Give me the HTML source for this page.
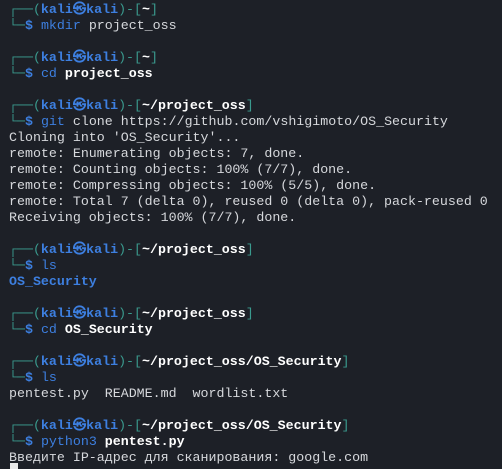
<!DOCTYPE html><html><head><style>
body{margin:0;background:#1d2027;width:502px;height:467px;overflow:hidden}
pre{margin:0;padding:2px 0 0 9px;font-family:"Liberation Mono","DejaVu Sans Mono",monospace;font-size:13.3px;line-height:16px;color:#d6d8dc}
.g{color:#3a9a8e}.b{color:#3d7fe0;font-weight:bold}.d{color:#3d7fe0}.w{color:#fff;font-weight:bold}
.cur{position:absolute;left:10px;top:463px;width:8px;height:6px;background:#e8e8e8}
</style></head><body><pre><span class="g">┌──(</span><span class="b">kali㉿kali</span><span class="g">)-[</span><span class="w">~</span><span class="g">]</span>
<span class="g">└─</span><span class="b">$</span> <span class="d">mkdir</span> project_oss

<span class="g">┌──(</span><span class="b">kali㉿kali</span><span class="g">)-[</span><span class="w">~</span><span class="g">]</span>
<span class="g">└─</span><span class="b">$</span> <span class="d">cd</span> <span class="w">project_oss</span>

<span class="g">┌──(</span><span class="b">kali㉿kali</span><span class="g">)-[</span><span class="w">~/project_oss</span><span class="g">]</span>
<span class="g">└─</span><span class="b">$</span> <span class="d">git</span> clone https://github.com/vshigimoto/OS_Security
Cloning into 'OS_Security'...
remote: Enumerating objects: 7, done.
remote: Counting objects: 100% (7/7), done.
remote: Compressing objects: 100% (5/5), done.
remote: Total 7 (delta 0), reused 0 (delta 0), pack-reused 0
Receiving objects: 100% (7/7), done.

<span class="g">┌──(</span><span class="b">kali㉿kali</span><span class="g">)-[</span><span class="w">~/project_oss</span><span class="g">]</span>
<span class="g">└─</span><span class="b">$</span> <span class="d">ls</span>
<span class="b">OS_Security</span>

<span class="g">┌──(</span><span class="b">kali㉿kali</span><span class="g">)-[</span><span class="w">~/project_oss</span><span class="g">]</span>
<span class="g">└─</span><span class="b">$</span> <span class="d">cd</span> <span class="w">OS_Security</span>

<span class="g">┌──(</span><span class="b">kali㉿kali</span><span class="g">)-[</span><span class="w">~/project_oss/OS_Security</span><span class="g">]</span>
<span class="g">└─</span><span class="b">$</span> <span class="d">ls</span>
pentest.py  README.md  wordlist.txt

<span class="g">┌──(</span><span class="b">kali㉿kali</span><span class="g">)-[</span><span class="w">~/project_oss/OS_Security</span><span class="g">]</span>
<span class="g">└─</span><span class="b">$</span> <span class="d">python3</span> <span class="w">pentest.py</span>
Введите IP-адрес для сканирования: google.com</pre><div class="cur"></div></body></html>
